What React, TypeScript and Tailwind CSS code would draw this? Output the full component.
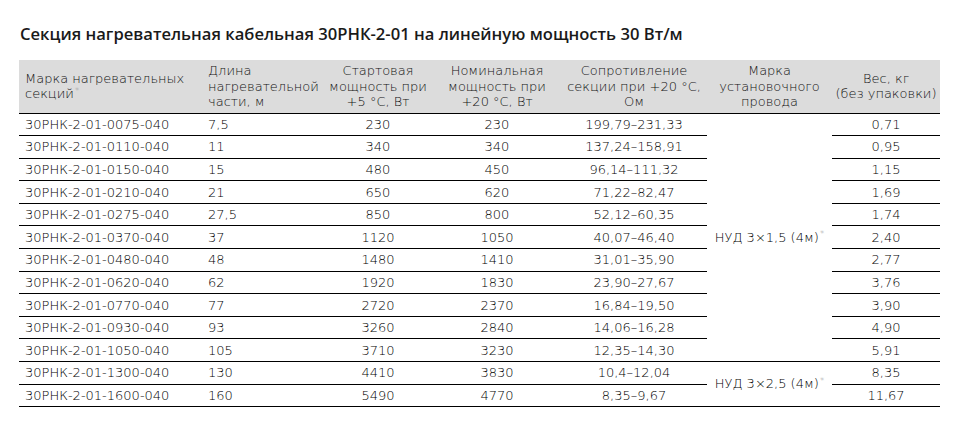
const rows: [string, string, string, string, string, string][] = [
  ["30РНК-2-01-0075-040", "7,5", "230", "230", "199,79–231,33", "0,71"],
  ["30РНК-2-01-0110-040", "11", "340", "340", "137,24–158,91", "0,95"],
  ["30РНК-2-01-0150-040", "15", "480", "450", "96,14–111,32", "1,15"],
  ["30РНК-2-01-0210-040", "21", "650", "620", "71,22–82,47", "1,69"],
  ["30РНК-2-01-0275-040", "27,5", "850", "800", "52,12–60,35", "1,74"],
  ["30РНК-2-01-0370-040", "37", "1120", "1050", "40,07–46,40", "2,40"],
  ["30РНК-2-01-0480-040", "48", "1480", "1410", "31,01–35,90", "2,77"],
  ["30РНК-2-01-0620-040", "62", "1920", "1830", "23,90–27,67", "3,76"],
  ["30РНК-2-01-0770-040", "77", "2720", "2370", "16,84–19,50", "3,90"],
  ["30РНК-2-01-0930-040", "93", "3260", "2840", "14,06–16,28", "4,90"],
  ["30РНК-2-01-1050-040", "105", "3710", "3230", "12,35–14,30", "5,91"],
  ["30РНК-2-01-1300-040", "130", "4410", "3830", "10,4–12,04", "8,35"],
  ["30РНК-2-01-1600-040", "160", "5490", "4770", "8,35–9,67", "11,67"],
];

function Star() {
  return <sup className="ml-[1px] text-[9px] text-[#9a9a9a]">*</sup>;
}

export default function App() {
  const td = "h-[22.6px] border-b border-black p-0 leading-none";
  return (
    <div className="h-[431px] w-[961px] bg-white text-black [font-family:'DejaVu_Sans',sans-serif]">
      <h1 className="pl-[20px] pt-[23px] text-[16.6px] font-semibold leading-[22px] text-[#1a1a1a] [font-family:'Open_Sans',sans-serif]">
        Секция нагревательная кабельная 30РНК-2-01 на линейную мощность 30 Вт/м
      </h1>
      <table className="ml-[19px] mt-[15px] w-[921px] table-fixed border-collapse text-[13px] font-extralight">
        <colgroup>
          <col className="w-[184px]" />
          <col className="w-[120px]" />
          <col className="w-[110px]" />
          <col className="w-[128px]" />
          <col className="w-[146px]" />
          <col className="w-[125px]" />
          <col className="w-[108px]" />
        </colgroup>
        <thead>
          <tr className="h-[53px] bg-[#dcdcdc] align-middle leading-[15.5px] text-[#111]">
            <th className="border-b border-black pl-[6px] text-left font-extralight">
              Марка нагревательных
              <br />
              секций<Star />
            </th>
            <th className="border-b border-black pl-[5px] text-left font-extralight">
              Длина нагревательной части, м
            </th>
            <th className="border-b border-black text-center font-extralight">
              Стартовая мощность при +5 °С, Вт
            </th>
            <th className="border-b border-black px-[10px] text-center font-extralight">
              Номинальная мощность при +20 °С, Вт
            </th>
            <th className="border-b border-black text-center font-extralight">
              Сопротивление секции при +20 °С, Ом
            </th>
            <th className="border-b border-black text-center font-extralight">
              Марка установочного провода
            </th>
            <th className="border-b border-black text-center font-extralight">
              Вес, кг
              <br />
              (без упаковки)
            </th>
          </tr>
        </thead>
        <tbody>
          {rows.map((r, i) => (
            <tr key={r[0]}>
              <td className={`${td} pl-[6px]`}>{r[0]}</td>
              <td className={`${td} pl-[5px]`}>{r[1]}</td>
              <td className={`${td} text-center`}>{r[2]}</td>
              <td className={`${td} text-center`}>{r[3]}</td>
              <td className={`${td} text-center`}>{r[4]}</td>
              {i === 0 && (
                <td rowSpan={11} className="border-b border-black p-0 text-center align-middle">
                  НУД 3×1,5 (4м)<Star />
                </td>
              )}
              {i === 11 && (
                <td rowSpan={2} className="border-b border-black p-0 text-center align-middle">
                  НУД 3×2,5 (4м)<Star />
                </td>
              )}
              <td className={`${td} text-center`}>{r[5]}</td>
            </tr>
          ))}
        </tbody>
      </table>
    </div>
  );
}
